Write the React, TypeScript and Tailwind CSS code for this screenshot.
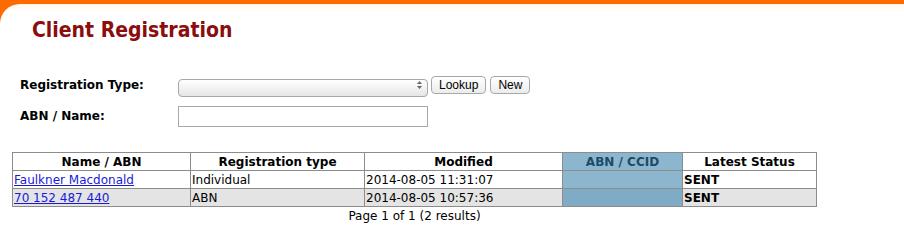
import React from "react";

const rows = [
  { name: "Faulkner Macdonald", type: "Individual", modified: "2014-08-05 11:31:07", status: "SENT", alt: false },
  { name: "70 152 487 440", type: "ABN", modified: "2014-08-05 10:57:36", status: "SENT", alt: true },
];

export default function App() {
  return (
    <div className="w-[904px] h-[240px] bg-[#ff6a00] pt-[4px] overflow-hidden" style={{ fontFamily: '"DejaVu Sans", Verdana, sans-serif' }}>
      <div className="h-full bg-white rounded-tl-[20px] bg-gradient-to-b from-[#fff6ea] to-white to-[8px]">
        <h1
          className="pl-[32px] pt-[14px] text-[21px] leading-[24px] font-bold text-[#8b0d0d]"
          style={{ fontFamily: '"DejaVu Sans Condensed", "DejaVu Sans", sans-serif' }}
        >
          Client Registration
        </h1>

        <div className="mt-[34px] pl-[20px] flex flex-col gap-[11px]">
          <div className="flex items-center h-[18px]">
            <label className="w-[158px] text-[12px] font-bold text-black">Registration Type:</label>
            <div className="relative w-[250px] h-[18px]">
              <select className="w-full h-full appearance-none rounded-[4px] border border-[#a8a8a8] bg-gradient-to-b from-white to-[#e6e6e6] text-[12px] px-1 outline-none">
                <option></option>
              </select>
              <svg className="absolute right-[6px] top-[5px] pointer-events-none" width="5" height="8" viewBox="0 0 5 8">
                <path d="M2.5 0 L5 3 H0 Z" fill="#666" />
                <path d="M2.5 8 L5 5 H0 Z" fill="#666" />
              </svg>
            </div>
            <button className="ml-[3px] h-[18px] px-[7px] rounded-[4px] border border-[#a8a8a8] bg-gradient-to-b from-white to-[#ececec] text-[12px] leading-[16px] text-black" style={{ fontFamily: '"Liberation Sans", Arial, sans-serif' }}>
              Lookup
            </button>
            <button className="ml-[4px] h-[18px] px-[7px] rounded-[4px] border border-[#a8a8a8] bg-gradient-to-b from-white to-[#ececec] text-[12px] leading-[16px] text-black" style={{ fontFamily: '"Liberation Sans", Arial, sans-serif' }}>
              New
            </button>
          </div>
          <div className="flex items-center h-[22px]">
            <label className="w-[158px] text-[12px] font-bold text-black">ABN / Name:</label>
            <input className="w-[250px] h-[21px] border border-[#a8a8a8] bg-white outline-none" />
          </div>
        </div>

        <div className="mt-[25px] pl-[12px] w-[817px]">
          <table className="w-[805px] border-collapse text-[12px] leading-[16px] text-black">
            <thead>
              <tr className="h-[18px]">
                <th className="w-[178px] border border-[#8c8c8c] font-bold bg-white p-0">Name / ABN</th>
                <th className="w-[174px] border border-[#8c8c8c] font-bold bg-white p-0">Registration type</th>
                <th className="w-[198px] border border-[#8c8c8c] font-bold bg-white p-0">Modified</th>
                <th className="w-[120px] border border-[#8c8c8c] font-bold bg-[#8cb6ce] text-[#1d4a66] p-0">ABN / CCID</th>
                <th className="border border-[#8c8c8c] font-bold bg-white p-0">Latest Status</th>
              </tr>
            </thead>
            <tbody>
              {rows.map((r) => (
                <tr key={r.name} className={`h-[18px] ${r.alt ? "bg-[#e4e4e4]" : "bg-white"}`}>
                  <td className="border border-[#8c8c8c] px-[1px] py-0">
                    <a href="#" className="text-[#1a1ad6] underline">{r.name}</a>
                  </td>
                  <td className="border border-[#8c8c8c] px-[1px] py-0">{r.type}</td>
                  <td className="border border-[#8c8c8c] px-[1px] py-0">{r.modified}</td>
                  <td className={`border border-[#8c8c8c] px-[1px] py-0 ${r.alt ? "bg-[#80abc5]" : "bg-[#8cb6ce]"}`}></td>
                  <td className="border border-[#8c8c8c] px-[1px] py-0 font-bold">{r.status}</td>
                </tr>
              ))}
            </tbody>
          </table>
          <div className="w-[805px] text-center text-[12px] leading-[16px] text-black pt-[1px]">Page 1 of 1 (2 results)</div>
        </div>
      </div>
    </div>
  );
}
